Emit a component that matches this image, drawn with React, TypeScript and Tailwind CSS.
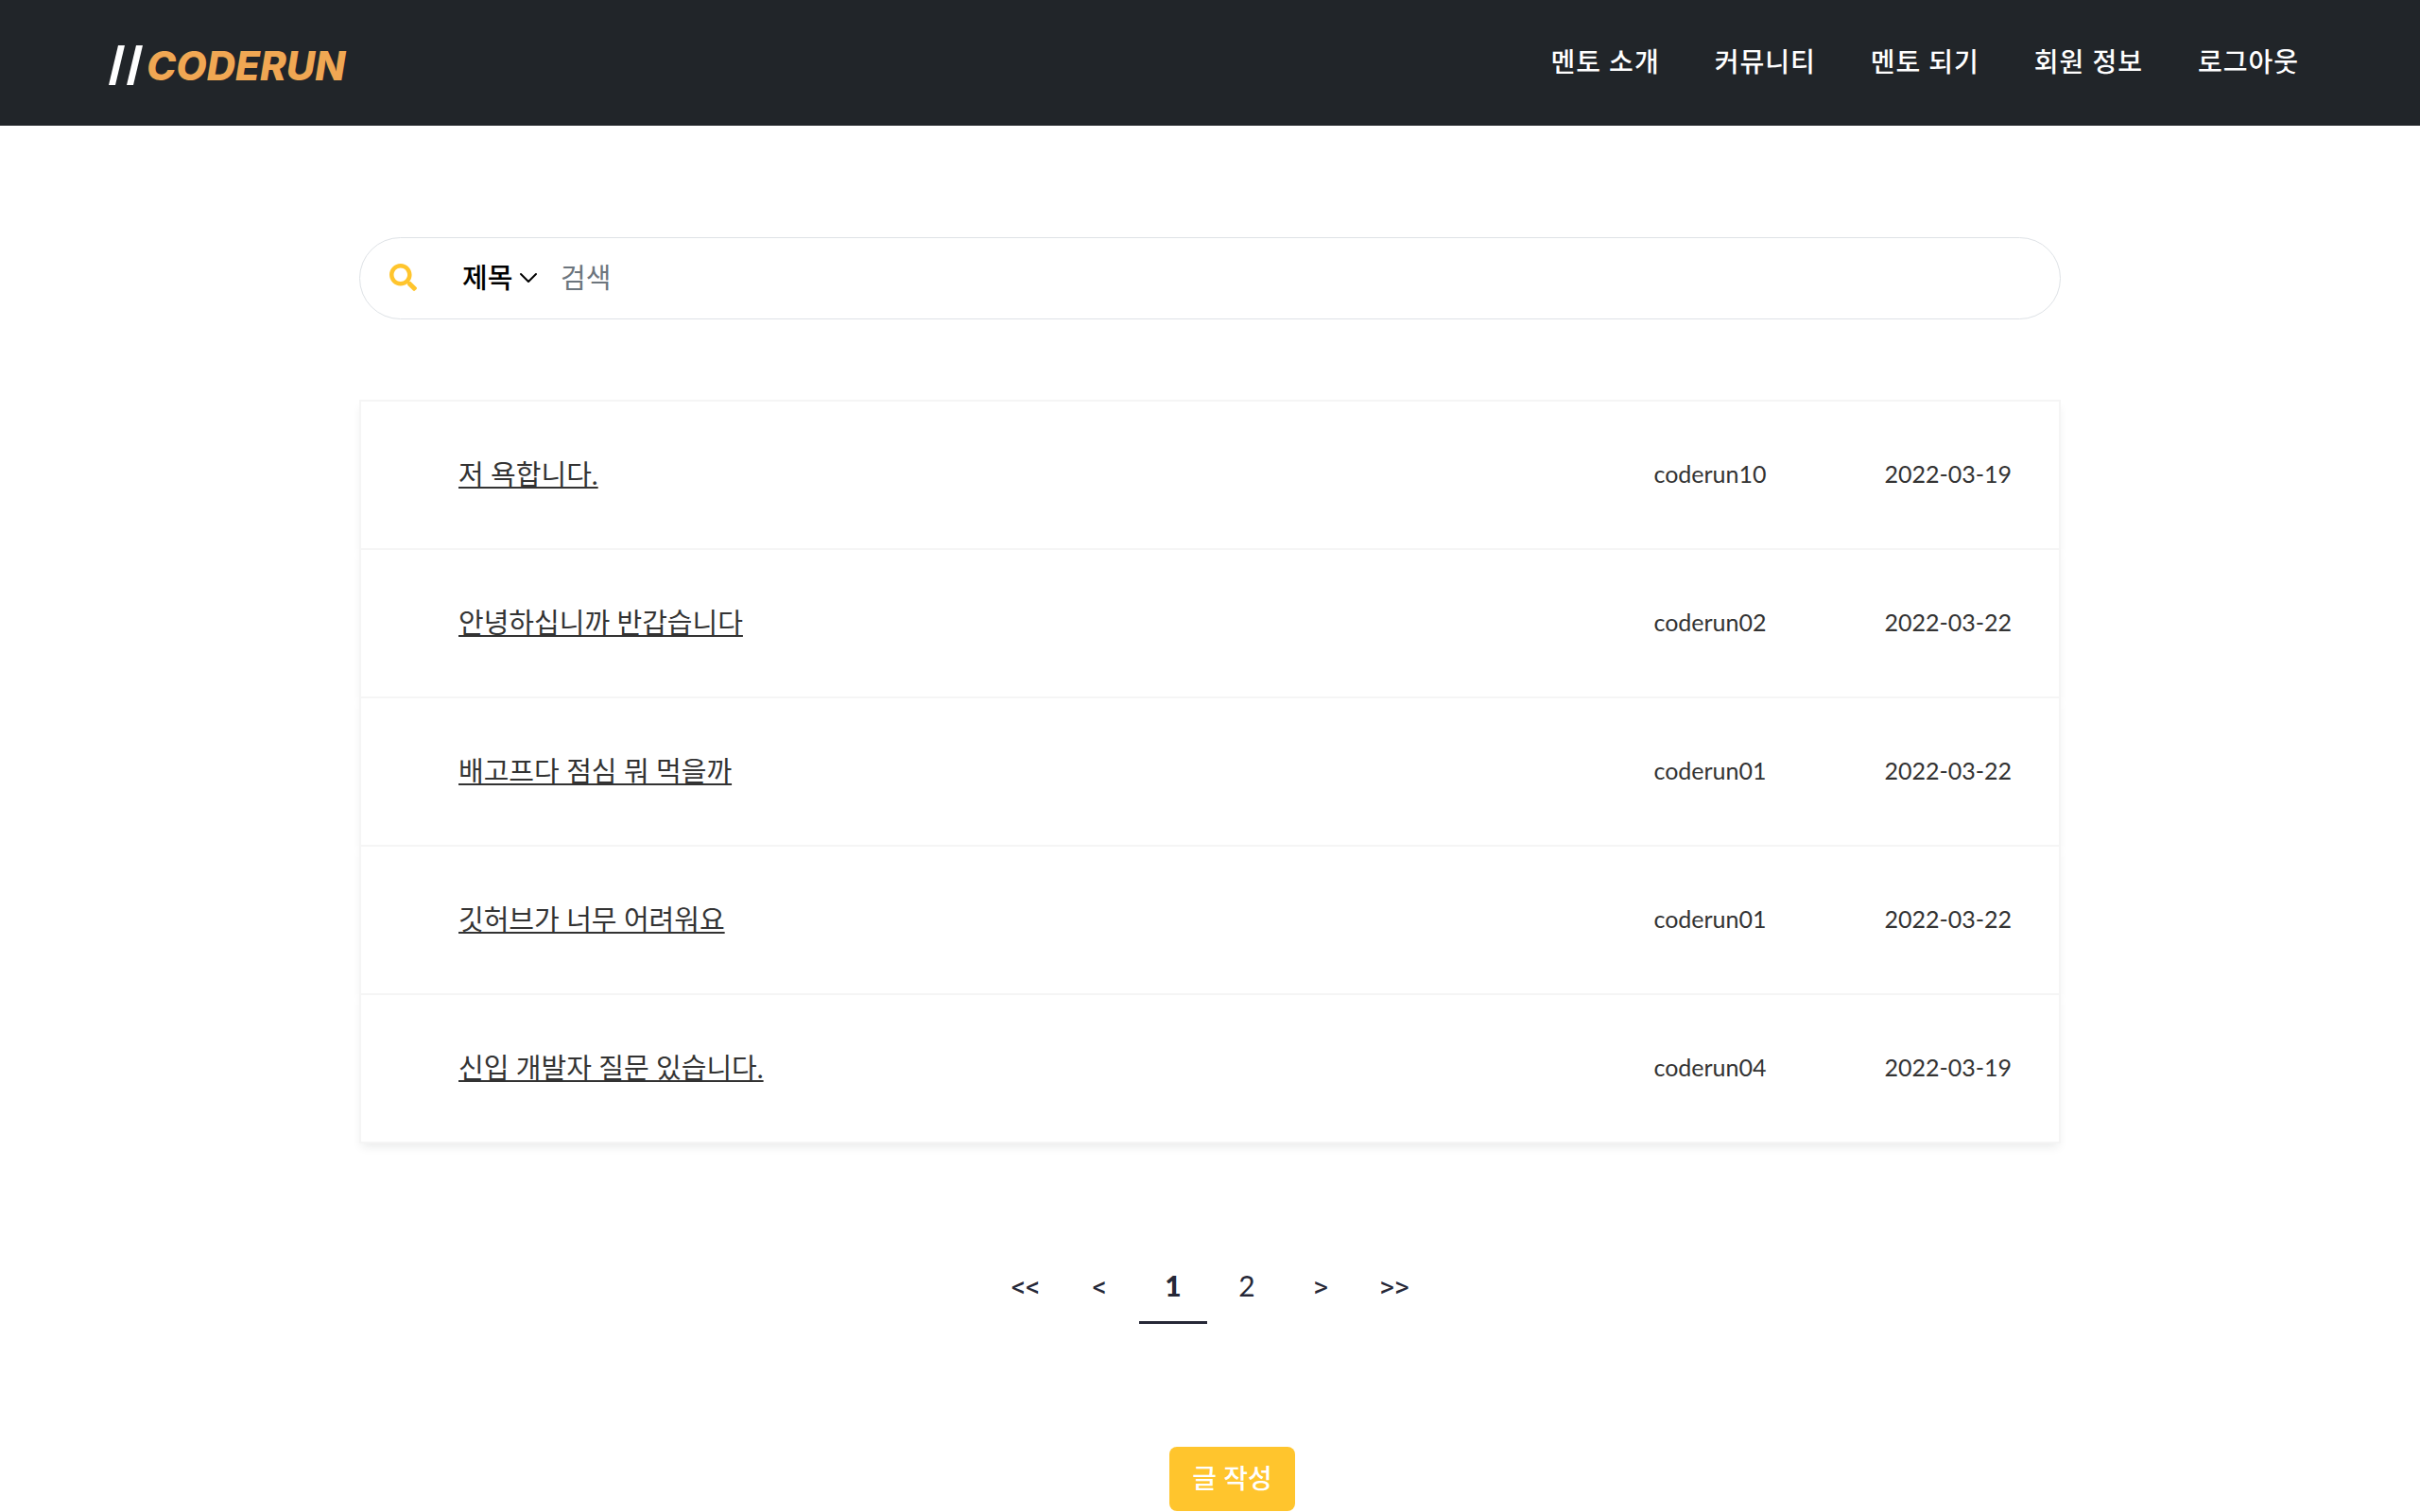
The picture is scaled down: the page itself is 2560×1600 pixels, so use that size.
import { FaSearch } from "react-icons/fa";

const menu = ["멘토 소개", "커뮤니티", "멘토 되기", "회원 정보", "로그아웃"];

const posts = [
  { title: "저 욕합니다.", author: "coderun10", date: "2022-03-19" },
  { title: "안녕하십니까 반갑습니다", author: "coderun02", date: "2022-03-22" },
  { title: "배고프다 점심 뭐 먹을까", author: "coderun01", date: "2022-03-22" },
  { title: "깃허브가 너무 어려워요", author: "coderun01", date: "2022-03-22" },
  { title: "신입 개발자 질문 있습니다.", author: "coderun04", date: "2022-03-19" },
];

const pages = ["<<", "<", "1", "2", ">", ">>"];

function Header() {
  return (
    <header className="flex h-[133px] items-center justify-between bg-[#212529] pl-[114px] pr-[128px]">
      <a href="#" className="flex items-center gap-[3px] pt-1">
        <svg className="h-[42px] w-[38px]" viewBox="0 0 38 42" fill="white" aria-hidden="true">
          <path d="M11 0h7L8 42H1z" />
          <path d="M30 0h7L27 42h-7z" />
        </svg>
        <span className="pt-[2px] font-['Inter'] text-[42px] leading-[44px] font-extrabold text-[#f0a753] italic">CODERUN</span>
      </a>
      <nav className="flex gap-[58px] pb-[3px]">
        {menu.map((label) => (
          <a key={label} href="#" className="text-[28px] leading-[42px] font-medium tracking-[1px] text-white">
            {label}
          </a>
        ))}
      </nav>
    </header>
  );
}

function SearchBar() {
  return (
    <form className="flex h-[87px] items-center rounded-full border border-[#dee2e6] pb-[2px] pl-[31px]">
      <button type="button" aria-label="검색하기" className="text-[#ffc52d]">
        <FaSearch size={29} />
      </button>
      <div className="relative ml-[48px] flex items-center">
        <select aria-label="검색 조건" className="w-[84px] appearance-none text-[29px] leading-[42px] font-medium text-black">
          <option>제목</option>
          <option>내용</option>
        </select>
        <svg className="pointer-events-none absolute right-[4px] h-[12px] w-[20px]" viewBox="0 0 20 12" fill="none" stroke="black" strokeWidth="2" strokeLinecap="round" strokeLinejoin="round" aria-hidden="true">
          <path d="M2 2l8 8 8-8" />
        </svg>
      </div>
      <input aria-label="검색" placeholder="검색" className="ml-5 h-[60px] min-w-0 flex-1 text-[29px] outline-none placeholder:text-[#6c757d]" />
    </form>
  );
}

export default function App() {
  return (
    <div className="min-h-screen bg-white font-['Lato','Noto_Sans_CJK_KR',sans-serif]" lang="ko">
      <Header />
      <main className="mx-auto max-w-[1800px] pt-[118px]">
        <SearchBar />
        <ul className="mt-[85px]">
          {posts.map((post) => (
            <li key={post.title} className="-mb-[2px] flex h-[159px] items-center border-2 border-[#f5f5f5] bg-white pb-[2px] pr-[50px] pl-[103px] text-[#333333] shadow-[0_6px_10px_-3px_rgba(33,37,41,0.1)]">
              <a href="#" className="flex-1 text-[29px] leading-[42px] underline">{post.title}</a>
              <span className="w-[244px] text-[25px]">{post.author}</span>
              <time className="text-[25px]">{post.date}</time>
            </li>
          ))}
        </ul>
        <nav aria-label="페이지" className="mt-[115px] flex justify-center gap-[6px]">
          {pages.map((page) => (
            <button
              key={page}
              type="button"
              aria-current={page === "1" ? "page" : undefined}
              className={
                /\d/.test(page)
                  ? "h-[78px] w-[72px] border-b-[3px] border-transparent text-[30px] text-[#262837] aria-[current=page]:border-[#262837] aria-[current=page]:font-black"
                  : "h-[78px] w-[72px] pb-[2px] font-['Roboto',sans-serif] text-[30px] text-[#262837]"
              }
            >
              {page}
            </button>
          ))}
        </nav>
        <div className="mt-[130px] flex justify-center pl-[47px]">
          <button type="button" className="h-[68px] w-[133px] rounded-lg bg-[#ffc52d] pb-[2px] text-[28px] font-medium text-white">
            글 작성
          </button>
        </div>
      </main>
    </div>
  );
}
